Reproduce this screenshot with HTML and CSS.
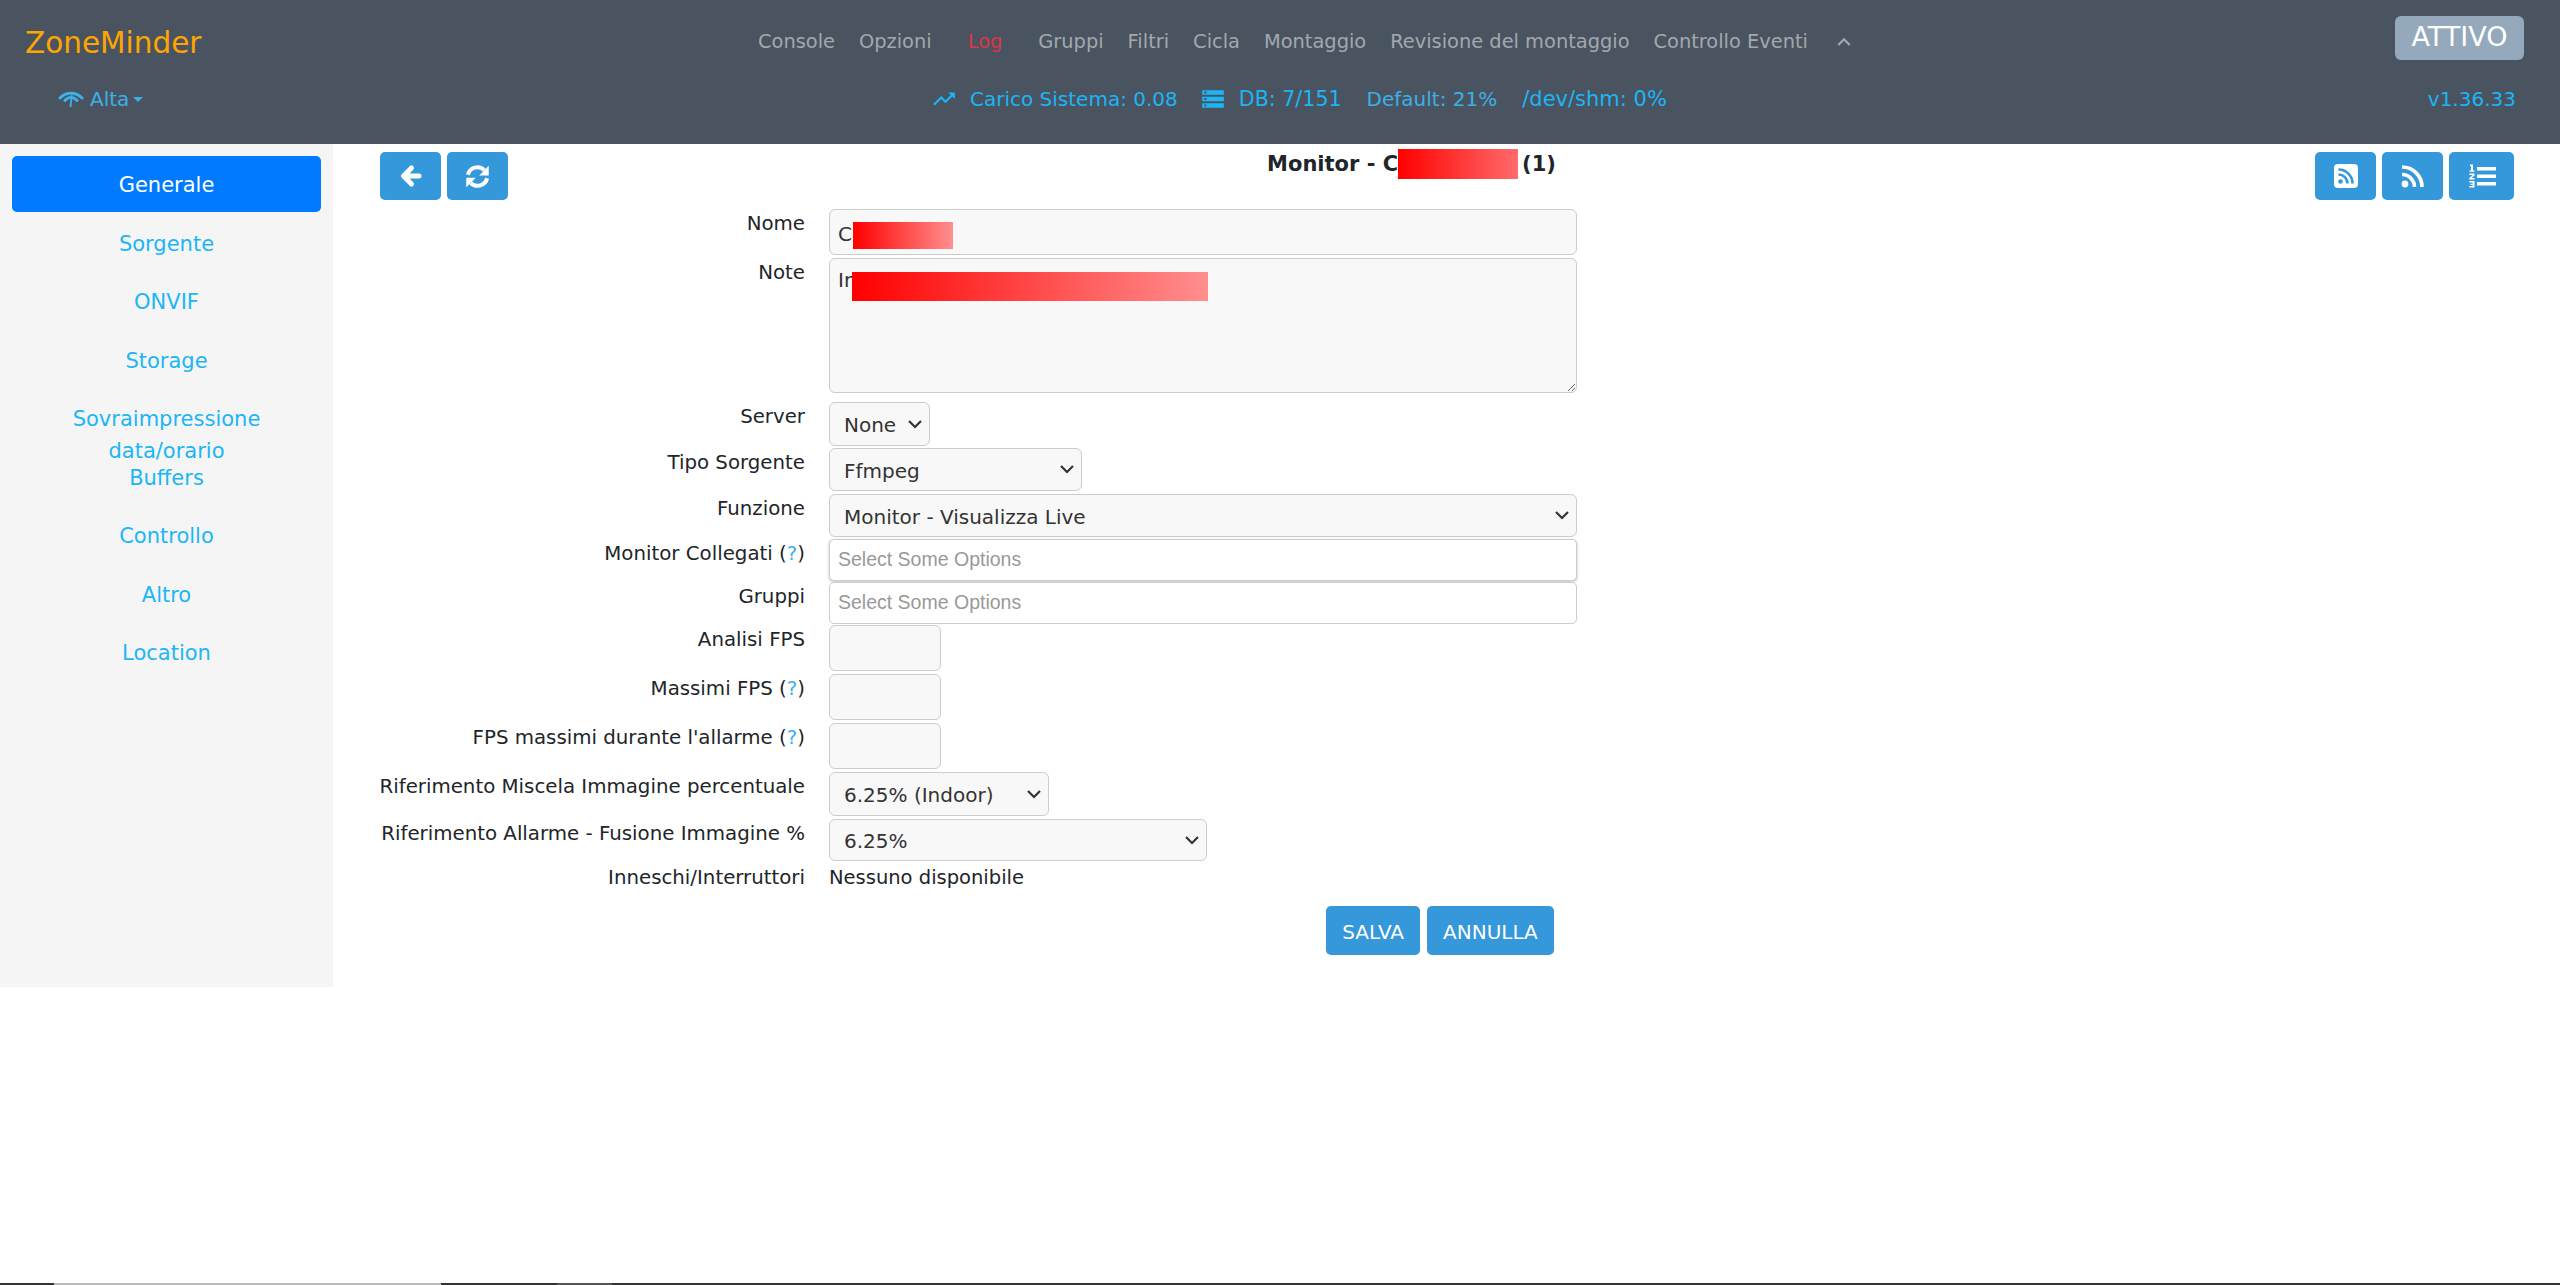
FILE: index.html
```html
<!DOCTYPE html>
<html lang="it">
<head>
  <meta charset="UTF-8">
  <title>ZoneMinder - Monitor</title>
  <link rel="stylesheet" href="styles.css">
</head>
<body>
<div class="page">

  <!-- Top navigation -->
  <header class="topbar">
    <div class="nav-row">
      <a class="brand">ZoneMinder</a>
      <nav class="nav-links">
        <a>Console</a>
        <a>Opzioni</a>
        <a class="log-link">Log</a>
        <a>Gruppi</a>
        <a>Filtri</a>
        <a>Cicla</a>
        <a>Montaggio</a>
        <a>Revisione del montaggio</a>
        <a>Controllo Eventi</a>
        <svg class="nav-chevron" viewBox="0 0 24 24"><path d="M12 8l-6 6 1.41 1.41L12 10.83l4.59 4.58L18 14z"/></svg>
      </nav>
      <span class="state-badge">ATTIVO</span>
    </div>
    <div class="status-row">
      <a class="bandwidth">
        <svg class="wifi-icon" viewBox="0 0 26 18"><path d="M2 8C8 1.500 18 1.500 24 8M7 10.500C10.500 6.500 15.500 6.500 19 10.500" fill="none" stroke="currentColor" stroke-width="3" stroke-linecap="round"/><path d="M13 5L11.500 17H13.500L14.500 5z" fill="currentColor"/></svg>
        Alta<i class="caret"></i>
      </a>
      <div class="stats">
        <svg class="stat-icon" viewBox="0 0 24 24"><path d="M16 6l2.29 2.29-4.88 4.88-4-4L2 16.59 3.41 18l6-6 4 4 6.3-6.29L22 12V6z"/></svg>
        <span class="stat-load">Carico Sistema: 0.08</span>
        <svg class="stat-icon" viewBox="0 0 24 24"><path d="M2 20h20v-4H2v4zm2-3h2v2H4v-2zM2 4v4h20V4H2zm4 3H4V5h2v2zm-4 7h20v-4H2v4zm2-3h2v2H4v-2z"/></svg>
        <span class="stat-db">DB: 7/151</span>
        <span class="stat-disk">Default: 21%</span>
        <span class="stat-shm">/dev/shm: 0%</span>
      </div>
      <span class="version">v1.36.33</span>
    </div>
  </header>

  <div class="main">

    <!-- Tabs on the left -->
    <aside class="sidebar">
      <a class="side-item active">Generale</a>
      <a class="side-item">Sorgente</a>
      <a class="side-item">ONVIF</a>
      <a class="side-item">Storage</a>
      <a class="side-item">Sovraimpressione data/orario</a>
      <a class="side-item">Buffers</a>
      <a class="side-item">Controllo</a>
      <a class="side-item">Altro</a>
      <a class="side-item">Location</a>
    </aside>

    <div class="content">
      <div class="toolbar">
        <div class="btn-group">
          <button class="icon-btn">
            <svg viewBox="0 0 24 24"><path d="M20 12H6M12.500 4L4.500 12L12.500 20" fill="none" stroke="#fff" stroke-width="5" stroke-linecap="round" stroke-linejoin="round"/></svg>
          </button>
          <button class="icon-btn">
            <svg class="refresh-icon" viewBox="0 0 24 24"><path d="M3.500 10.500A8.700 8.700 0 0 1 18 6.200" fill="none" stroke="#fff" stroke-width="3.600"/><path d="M22 2.500V11H13.500z" fill="#fff"/><path d="M20.500 13.500A8.700 8.700 0 0 1 6 17.800" fill="none" stroke="#fff" stroke-width="3.600"/><path d="M2 21.500V13H10.500z" fill="#fff"/></svg>
          </button>
        </div>
        <h2 class="page-title">Monitor - C<span class="redact redact-title"></span>(1)</h2>
        <div class="btn-group">
          <button class="icon-btn">
            <svg viewBox="0 0 24 24"><path fill-rule="evenodd" d="M4 0H20A4 4 0 0 1 24 4V20A4 4 0 0 1 20 24H4A4 4 0 0 1 0 20V4A4 4 0 0 1 4 0z" fill="#fff"/><circle cx="6.500" cy="17.500" r="2.300" fill="#3498db"/><path d="M4.500 10.500A9 9 0 0 1 13.500 19.500M4.500 5.500A14 14 0 0 1 18.500 19.500" fill="none" stroke="#3498db" stroke-width="2.600"/></svg>
          </button>
          <button class="icon-btn">
            <svg viewBox="0 0 24 24"><circle cx="4" cy="20" r="3.400" fill="#fff"/><path d="M1 10.500A12.500 12.500 0 0 1 13.500 23M1 3A20 20 0 0 1 21 23" fill="none" stroke="#fff" stroke-width="3.600"/></svg>
          </button>
          <button class="icon-btn icon-btn-wide">
            <svg class="list-icon" viewBox="0 0 28 24"><path d="M9 3H28V6.500H9zM9 10.500H28V14H9zM9 18H28V21.500H9z" fill="#fff"/><path d="M2 .5H5V6.500H6.500V7.800H1.500V6.500H3V2L2 2.400zM1.300 9.500H6.500V11.500L3.500 14H6.500V15.500H1.300V14L4.500 11.200V11H1.300zM1.300 17H6.500V23.500H1.300V22H4.700V21H2.500V19.800H4.700V18.500H1.300z" fill="#fff"/></svg>
          </button>
        </div>
      </div>

      <!-- Monitor form -->
      <form class="monitor-form">
        <div class="form-row">
          <label>Nome</label>
          <div class="field field-full">
            <input class="ctl ctl-name" type="text" value="C">
            <span class="redact redact-name"></span>
          </div>
        </div>
        <div class="form-row form-row-loose">
          <label>Note</label>
          <div class="field field-full">
            <textarea class="ctl ctl-note">In</textarea>
            <span class="redact redact-note"></span>
          </div>
        </div>
        <div class="form-row form-row-tight">
          <label>Server</label>
          <select class="ctl ctl-select sel-server"><option>None</option></select>
        </div>
        <div class="form-row">
          <label>Tipo Sorgente</label>
          <select class="ctl ctl-select sel-source"><option>Ffmpeg</option></select>
        </div>
        <div class="form-row form-row-tight">
          <label>Funzione</label>
          <select class="ctl ctl-select sel-full"><option>Monitor - Visualizza Live</option></select>
        </div>
        <div class="form-row form-row-flush">
          <label>Monitor Collegati (<a class="help">?</a>)</label>
          <div class="chosen chosen-shadow">Select Some Options</div>
        </div>
        <div class="form-row form-row-flush">
          <label>Gruppi</label>
          <div class="chosen">Select Some Options</div>
        </div>
        <div class="form-row">
          <label>Analisi FPS</label>
          <input class="ctl ctl-fps" type="text">
        </div>
        <div class="form-row">
          <label>Massimi FPS (<a class="help">?</a>)</label>
          <input class="ctl ctl-fps" type="text">
        </div>
        <div class="form-row">
          <label>FPS massimi durante l'allarme (<a class="help">?</a>)</label>
          <input class="ctl ctl-fps" type="text">
        </div>
        <div class="form-row">
          <label>Riferimento Miscela Immagine percentuale</label>
          <select class="ctl ctl-select sel-blend"><option>6.25% (Indoor)</option></select>
        </div>
        <div class="form-row form-row-tight">
          <label>Riferimento Allarme - Fusione Immagine %</label>
          <select class="ctl ctl-select sel-alarm"><option>6.25%</option></select>
        </div>
        <div class="form-row">
          <label>Inneschi/Interruttori</label>
          <span class="plain-value">Nessuno disponibile</span>
        </div>
        <div class="form-actions">
          <button class="action-btn" type="button">SALVA</button>
          <button class="action-btn" type="button">ANNULLA</button>
        </div>
      </form>
    </div>
  </div>

  <!-- Bit of the window edge at the very bottom -->
  <div class="edge-strip">
    <i class="edge-a"></i><i class="edge-b"></i><i class="edge-c"></i><i class="edge-d"></i><i class="edge-e"></i>
  </div>
</div>
</body>
</html>
```

FILE: styles.css
```css
/* Page */
* {
  box-sizing: border-box;
}

body {
  margin: 0;
  font-family: "DejaVu Sans", sans-serif;
  font-size: 20px;
  line-height: 27px;
  color: #212529;
  background: #fff;
}

.page {
  display: flex;
  flex-direction: column;
  height: 100vh;
  overflow: hidden;
}

/* Top bar */
.topbar {
  height: 144px;
  flex-shrink: 0;
  background: #495460;
}

.nav-row {
  display: flex;
  height: 76px;
  padding: 16px 36px 0 25px;
  position: relative;
}

.brand {
  width: 733px;
  padding-top: 14px;
  font-size: 29.500px;
  color: #ffa500;
}

.nav-links {
  display: flex;
  gap: 24px;
  padding-top: 12px;
  font-size: 19.400px;
  color: #a3a8ae;
  white-space: nowrap;
}

.log-link {
  margin: 0 12px 0 12px;
  color: #dc3545;
}

.nav-chevron {
  width: 26px;
  height: 26px;
  margin: 1px 0 0 -1px;
  fill: #a3a8ae;
}

.state-badge {
  margin-left: auto;
  width: 129px;
  height: 44px;
  border-radius: 6px;
  background: #94a9bb;
  color: #fff;
  font-size: 27px;
  line-height: 42px;
  text-align: center;
}

.status-row {
  display: flex;
  align-items: center;
  height: 46px;
  padding: 0 44px 0 58px;
  color: #1cb5f5;
}

.bandwidth {
  display: flex;
  align-items: center;
  width: 873px;
  color: #3cb0e8;
}

.wifi-icon {
  width: 26px;
  height: 18px;
  margin-right: 6px;
}

.caret {
  width: 0;
  height: 0;
  margin-left: 4px;
  border: 5px solid transparent;
  border-top-color: #3cb0e8;
  border-bottom: 0;
}

.stats {
  display: flex;
  align-items: center;
  white-space: nowrap;
}

.stat-icon {
  width: 26px;
  height: 26px;
  margin-right: 13px;
  fill: #1cb5f5;
}

.stat-load {
  margin-right: 22px;
}

.stat-db {
  margin-right: 25px;
  font-size: 20.600px;
}

.stat-disk {
  margin-right: 25px;
  color: #3cb0e8;
}

.stat-shm {
  font-size: 21px;
}

.version {
  margin-left: auto;
}

/* Sidebar */
.main {
  display: flex;
  flex: 1;
  min-height: 0;
}

.sidebar {
  width: 333px;
  height: 843px;
  flex-shrink: 0;
  padding: 12px 12px 0;
  background: #f5f5f5;
}

.side-item {
  display: block;
  height: 56px;
  margin-bottom: 2.500px;
  padding: 13px 30px 0;
  border-radius: 5px;
  color: #1cb5f5;
  font-size: 21px;
  line-height: 32px;
  text-align: center;
}

.side-item.active {
  background: #007bff;
  color: #fff;
}

/* Content */
.content {
  flex: 1;
  min-width: 0;
}

.toolbar {
  display: flex;
  height: 65px;
  padding: 8px 46px 0 47px;
}

.btn-group {
  display: flex;
  gap: 6px;
}

.icon-btn {
  display: flex;
  align-items: center;
  justify-content: center;
  width: 61px;
  height: 48px;
  padding: 0;
  border: none;
  border-radius: 5px;
  background: #3498db;
}

.icon-btn svg {
  width: 24px;
  height: 24px;
}

.icon-btn .refresh-icon {
  width: 27px;
  height: 27px;
}

.icon-btn .list-icon {
  width: 28px;
}

.icon-btn-wide {
  width: 65px;
}

.page-title {
  flex: 1;
  margin: 0;
  font-size: 21px;
  font-weight: 700;
  line-height: 24px;
  text-align: center;
  white-space: nowrap;
}

.redact {
  display: inline-block;
  background: linear-gradient(to right, #f00, #ff8f8f);
}

.redact-title {
  width: 120px;
  height: 30px;
  margin: -3px 4px -8px 0;
  vertical-align: baseline;
  background: linear-gradient(to right, #f00, #ff6b6b);
}

.redact-name {
  position: absolute;
  top: 13px;
  left: 24px;
  width: 100px;
  height: 27px;
}

.redact-note {
  position: absolute;
  top: 14px;
  left: 23px;
  width: 356px;
  height: 29px;
}

/* Form */
.monitor-form {
  padding-left: 46px;
}

.form-row {
  display: flex;
  gap: 24px;
  margin-bottom: 3px;
}

.form-row-loose {
  margin-bottom: 9px;
}

.form-row-tight {
  margin-bottom: 2px;
}

.form-row-flush {
  margin-bottom: 1px;
}

.form-row label {
  flex-shrink: 0;
  width: 426px;
  margin-top: 1px;
  font-size: 19.800px;
  text-align: right;
  white-space: nowrap;
}

.help {
  color: #3cb0e8;
}

.field {
  position: relative;
}

.field-full {
  width: 748px;
}

.ctl {
  display: block;
  border: 1px solid #ccc;
  border-radius: 6px;
  background-color: #f8f8f8;
  color: #333;
  font-family: "DejaVu Sans", sans-serif;
  font-size: 20px;
}

.ctl-name {
  width: 100%;
  height: 46px;
  padding: 4px 8px 0;
}

.ctl-note {
  width: 100%;
  height: 135px;
  padding: 8px;
  line-height: 27px;
}

/* Own arrow, the native one is too small here */
.ctl-select {
  height: 43px;
  padding: 2px 30px 0 14px;
  appearance: none;
  background-image: url("data:image/svg+xml,%3Csvg xmlns='http://www.w3.org/2000/svg' width='14' height='9'%3E%3Cpath d='M1 1l6 6 6-6' fill='none' stroke='%23333' stroke-width='2.200'/%3E%3C/svg%3E");
  background-repeat: no-repeat;
  background-position: right 7px center;
}

.sel-server {
  width: 101px;
  height: 44px;
}

.sel-source {
  width: 253px;
}

.sel-full {
  width: 748px;
}

.sel-blend {
  width: 220px;
  height: 44px;
}

.sel-alarm {
  width: 378px;
  height: 42px;
}

.ctl-fps {
  width: 112px;
  height: 46px;
}

.chosen {
  width: 748px;
  height: 42px;
  padding: 0 8px;
  border: 1px solid #ccc;
  border-radius: 5px;
  background: #fff;
  color: #999;
  font-family: "Liberation Sans", sans-serif;
  font-size: 19.500px;
  line-height: 38px;
}

.chosen-shadow {
  box-shadow: 0 1px 3px rgba(0, 0, 0, 0.25);
}

.plain-value {
  margin-top: 1px;
  font-size: 19.500px;
}

/* Save / cancel */
.form-actions {
  display: flex;
  justify-content: center;
  gap: 7px;
  margin-top: 15px;
  padding-right: 59px;
}

.action-btn {
  height: 49px;
  padding: 2px 16px 0;
  border: none;
  border-radius: 5px;
  background: #3498db;
  color: #fff;
  font-family: "DejaVu Sans", sans-serif;
  font-size: 20px;
}

/* Window edge */
.edge-strip {
  display: flex;
  height: 2px;
  flex-shrink: 0;
}

.edge-strip i {
  display: block;
  background: #333;
}

.edge-a {
  width: 54px;
}

.edge-strip .edge-b {
  width: 387px;
  background: #bbb;
}

.edge-c {
  width: 116px;
}

.edge-strip .edge-d {
  width: 55px;
  background: #555;
}

.edge-e {
  flex: 1;
}
```
